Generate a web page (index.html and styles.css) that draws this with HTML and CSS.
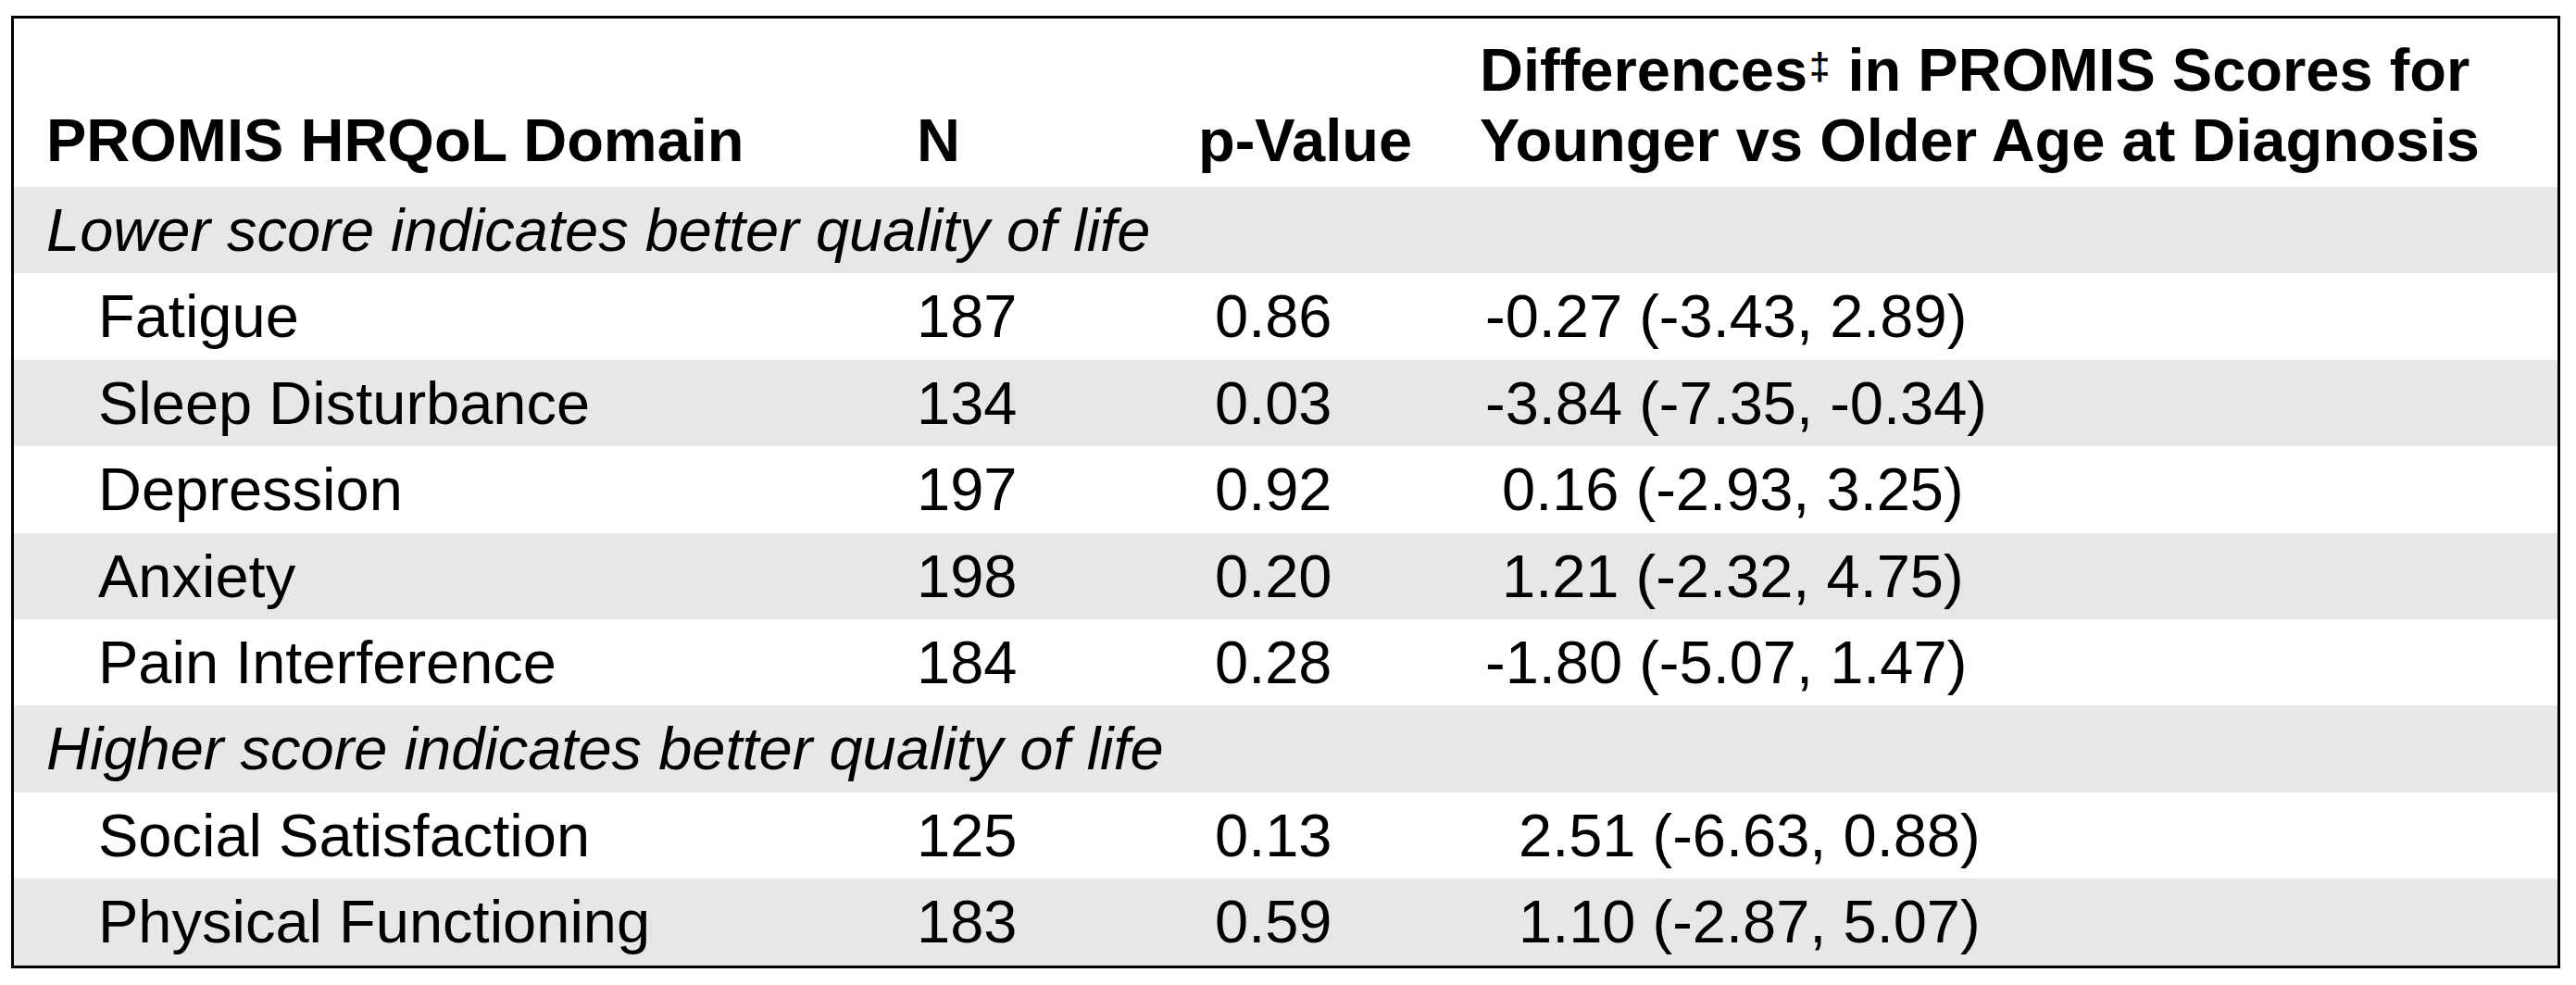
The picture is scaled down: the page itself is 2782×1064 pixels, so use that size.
FILE: index.html
```html
<!DOCTYPE html>
<html lang="en">
<head>
<meta charset="utf-8">
<title>PROMIS HRQoL Domain differences</title>
<link rel="stylesheet" href="styles.css">
</head>
<body>
<div class="frame">
  <table class="tbl">
    <colgroup>
      <col class="c-domain">
      <col class="c-n">
      <col class="c-p">
      <col class="c-diff">
    </colgroup>
    <thead>
      <tr class="head">
        <th>PROMIS HRQoL Domain</th>
        <th>N</th>
        <th>p-Value</th>
        <th class="th-diff">Differences<sup class="dd">‡</sup> in PROMIS Scores for<br>Younger vs Older Age at Diagnosis</th>
      </tr>
    </thead>
    <tbody>
      <tr class="row gray section"><td colspan="4">Lower score indicates better quality of life</td></tr>
      <tr class="row"><td class="dom">Fatigue</td><td>187</td><td class="pv">0.86</td><td class="df neg">-0.27 (-3.43, 2.89)</td></tr>
      <tr class="row gray"><td class="dom">Sleep Disturbance</td><td>134</td><td class="pv">0.03</td><td class="df neg">-3.84 (-7.35, -0.34)</td></tr>
      <tr class="row"><td class="dom">Depression</td><td>197</td><td class="pv">0.92</td><td class="df pos">0.16 (-2.93, 3.25)</td></tr>
      <tr class="row gray"><td class="dom">Anxiety</td><td>198</td><td class="pv">0.20</td><td class="df pos">1.21 (-2.32, 4.75)</td></tr>
      <tr class="row"><td class="dom">Pain Interference</td><td>184</td><td class="pv">0.28</td><td class="df neg">-1.80 (-5.07, 1.47)</td></tr>
      <tr class="row gray section"><td colspan="4">Higher score indicates better quality of life</td></tr>
      <tr class="row"><td class="dom">Social Satisfaction</td><td>125</td><td class="pv">0.13</td><td class="df pos2">2.51 (-6.63, 0.88)</td></tr>
      <tr class="row gray"><td class="dom">Physical Functioning</td><td>183</td><td class="pv">0.59</td><td class="df pos2">1.10 (-2.87, 5.07)</td></tr>
    </tbody>
  </table>
</div>
</body>
</html>
```

FILE: styles.css
```css
html, body {
  margin: 0;
  padding: 0;
  background: #ffffff;
}

body {
  font-family: "Liberation Sans", Arial, Helvetica, sans-serif;
  color: #000000;
}

.frame {
  box-sizing: border-box;
  width: 2753px;
  margin: 17px 0 0 12px;
  border: 3px solid #000000;
}

.tbl {
  width: 100%;
  table-layout: fixed;
  border-collapse: separate;
  border-spacing: 0;
  font-size: 65px;
}

.c-domain { width: 940px; }
.c-n { width: 304px; }
.c-p { width: 304px; }
.c-diff { width: auto; }

.tbl th,
.tbl td {
  padding: 0 0 0 35px;
  text-align: left;
  white-space: nowrap;
  overflow: hidden;
}

.head th {
  font-weight: bold;
  line-height: 76px;
  padding-top: 18px;
  padding-bottom: 12px;
  vertical-align: bottom;
}

.dd {
  font-size: 0.62em;
  line-height: 0;
  vertical-align: 12px;
  margin: 0 1px 0 2px;
}

.row td {
  height: 93.4px;
  line-height: 93.4px;
  vertical-align: middle;
}

.gray td {
  background: #e7e7e7;
}

.section td {
  font-style: italic;
}

.row td.dom {
  padding-left: 91px;
}

.row td.pv {
  padding-left: 53px;
}

.row td.df { padding-left: 41px; }
.row td.df.pos { padding-left: 59px; }
.row td.df.pos2 { padding-left: 77px; }
```
